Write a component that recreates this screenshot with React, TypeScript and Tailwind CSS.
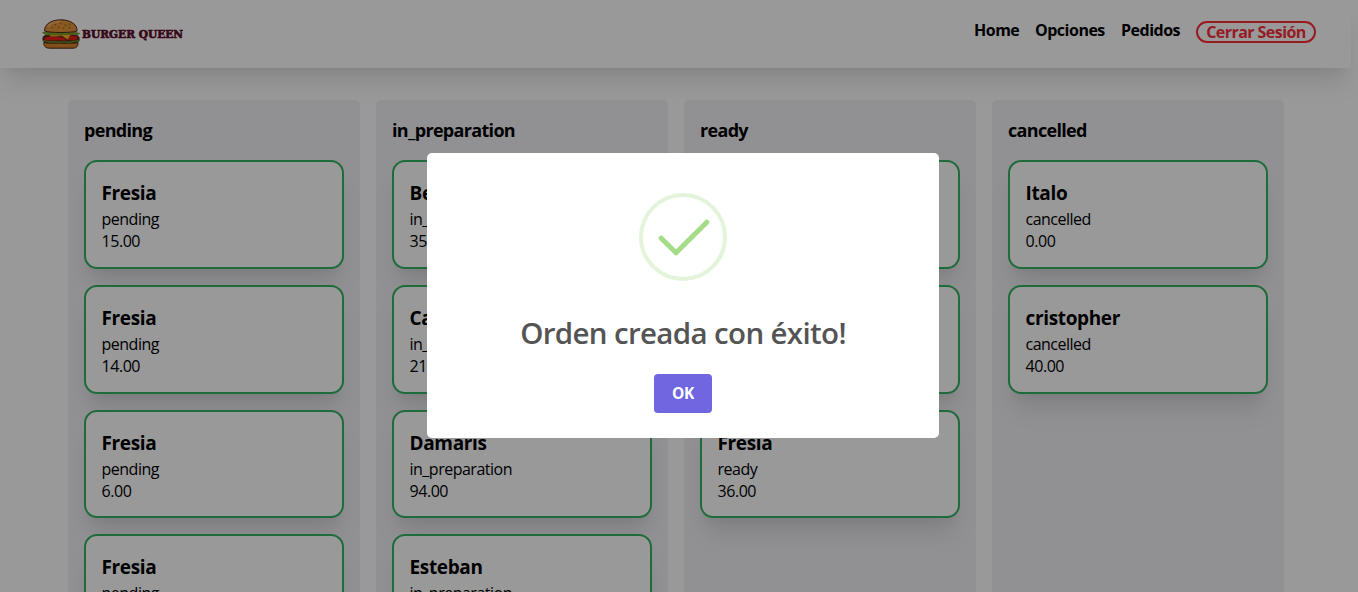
type Order = { name: string; total: string };
type Column = { status: string; orders: Order[] };

const columns: Column[] = [
  {
    status: 'pending',
    orders: [
      { name: 'Fresia', total: '15.00' },
      { name: 'Fresia', total: '14.00' },
      { name: 'Fresia', total: '6.00' },
      { name: 'Fresia', total: '12.00' },
    ],
  },
  {
    status: 'in_preparation',
    orders: [
      { name: 'Benja', total: '35.00' },
      { name: 'Camila', total: '21.00' },
      { name: 'Damaris', total: '94.00' },
      { name: 'Esteban', total: '18.00' },
    ],
  },
  {
    status: 'ready',
    orders: [
      { name: 'Ana', total: '20.00' },
      { name: 'Luis', total: '28.00' },
      { name: 'Fresia', total: '36.00' },
    ],
  },
  {
    status: 'cancelled',
    orders: [
      { name: 'Italo', total: '0.00' },
      { name: 'cristopher', total: '40.00' },
    ],
  },
];

function Logo() {
  return (
    <svg width="144" height="32" viewBox="0 0 144 32" className="block" aria-label="Burger Queen">
      <path d="M1.8 24.5H36C36.4 28 34.5 30.2 31 30.2H7.5C3.5 30.2 1.6 28 1.8 24.5Z" fill="#d9822b" stroke="#4a2a16" strokeWidth="1" />
      <path d="M.8 20.5C.8 18 3 17 6 17H33C36 17 37.3 19 37.3 21C37.3 24 35 25.2 32 25.2H7C3 25.2 .8 24 .8 20.5Z" fill="#59301c" stroke="#35200f" strokeWidth="0.7" />
      <path d="M1 23C4 21.5 6 25 10 23.9S15 25.3 19 24.1S26 25.2 29 24S34 24.2 37.2 22.2" fill="none" stroke="#5f8f2a" strokeWidth="1.6" />
      <path d="M2 20.5C5 17.5 12 18 16 18L23 20.5L24 22.6H7C4 22.6 2 22 2 20.5ZM23 18L33.5 17.8C36.5 18.2 36.5 21.8 33 22.2L25 22Z" fill="#e8201c" stroke="#8d1711" strokeWidth="0.4" />
      <path d="M5 15.5L34 15L28 17.6L25.5 21.6L20 17.8L9 18.4Z" fill="#fbb827" stroke="#a86a18" strokeWidth="0.4" />
      <path d="M.6 14.6C4 13 7 15.2 11 14.4S17 15.6 21 14.6S28 15.8 31 14.4S35 15.2 37.8 15.4C36 17 33 16.8 31 16.1C27 17 24 16 21 16.6S13 16.2 10 16.8S3 17 .6 14.6Z" fill="#7fae2f" stroke="#486a1b" strokeWidth="0.5" />
      <path d="M2.6 13C2.2 5.8 10 1.8 18.8 1.8S35.4 5.8 35 13C31 15 7 15 2.6 13Z" fill="#e5943a" stroke="#4a2a16" strokeWidth="1" />
      <path d="M6 8.2C9 4.6 14 3.6 18 3.6" fill="none" stroke="#f2b465" strokeWidth="1.6" strokeLinecap="round" />
      <path d="M13 6.6l.8.2M18 5.2l.8-.2M23 7.2l.8.2M27 6l.7.4M16.5 9.3l.8-.1M10 9.6l.8.1M21 10.2l.8-.1M27 9.6l.8.1" stroke="#8a5223" strokeWidth="1" strokeLinecap="round" />
      <text x="40" y="19.9" className="font-['DejaVu_Serif',serif] font-bold" fontSize="10.6" fill="#5c0c2c" stroke="#5c0c2c" strokeWidth="0.6" textLength="101" lengthAdjust="spacingAndGlyphs">
        BURGER QUEEN
      </text>
    </svg>
  );
}

function Header() {
  return (
    <header className="flex h-[68px] w-[1351px] items-start justify-between bg-white pr-[35px] pl-[42px] shadow-[0_20px_25px_-5px_rgba(0,0,0,0.1),0_10px_10px_-5px_rgba(0,0,0,0.04)]">
      <div className="pt-[18px]">
        <Logo />
      </div>
      <nav className="flex gap-4 pt-[19px] text-[16px] leading-[22px] font-bold text-black">
        <a className="w-[45px] tracking-[-0.5px] whitespace-nowrap">Home</a>
        <a className="w-[70px] tracking-[-0.5px] whitespace-nowrap">Opciones</a>
        <a className="w-[59px] tracking-[-0.5px] whitespace-nowrap">Pedidos</a>
        <button className="mt-0.5 flex h-[22px] w-[120px] items-center justify-center rounded-[12px] border-2 border-[#fb2f3c] font-bold tracking-[-0.55px] whitespace-nowrap text-[#fb2f3c]">
          Cerrar Sesión
        </button>
      </nav>
    </header>
  );
}

function OrderCard({ name, total, status }: Order & { status: string }) {
  return (
    <article className="h-[108.67px] shrink-0 rounded-[13px] border-2 border-[#34b262] bg-white pt-4 pl-[15.5px] shadow-[0_20px_25px_-5px_rgba(0,0,0,0.1),0_10px_10px_-5px_rgba(0,0,0,0.04)]">
      <h3 className="text-[19px] leading-[30px] font-bold tracking-[-0.35px]">{name}</h3>
      <p className="text-[16px] leading-[22px] tracking-[-0.5px]">{status}</p>
      <p className="text-[16px] leading-[22px] tracking-[-0.45px]">{total}</p>
    </article>
  );
}

function Board() {
  return (
    <main className="flex h-[600px] gap-4 pt-8 pl-[68px]">
      {columns.map((column) => (
        <section key={column.status} className="flex w-[292px] flex-col rounded-[5px] bg-[#f2f2f6] px-4 pt-[15px]">
          <h2 className="mb-[15.4px] text-[18px] leading-[30px] font-bold tracking-[-0.68px]">{column.status}</h2>
          <div className="flex flex-col gap-4">
            {column.orders.map((order, i) => (
              <OrderCard key={i} {...order} status={column.status} />
            ))}
          </div>
        </section>
      ))}
    </main>
  );
}

function SuccessDialog() {
  return (
    <div className="absolute inset-0 flex items-start bg-black/40 pt-[153px] pl-[427px]">
      <div role="dialog" className="flex h-[285px] w-[512px] flex-col items-center rounded-[5px] bg-white pt-10">
        <svg width="88" height="88" viewBox="0 0 88 88" fill="none">
          <circle cx="44" cy="44" r="42" stroke="#e4f4da" strokeWidth="4" />
          <path d="M22.2 45.2L37 59.8L67.8 29.2" stroke="#a5dc86" strokeWidth="5" strokeLinecap="round" strokeLinejoin="round" />
        </svg>
        <h2 className="mt-8 text-[29.5px] leading-[40px] font-semibold tracking-[-0.65px] whitespace-nowrap text-[#545454]">
          Orden creada con éxito!
        </h2>
        <button className="mt-[21px] h-[39px] w-[58px] rounded-[4px] bg-[#7066e0] text-[15.5px] font-bold tracking-[-0.4px] text-white">
          OK
        </button>
      </div>
    </div>
  );
}

export default function App() {
  return (
    <div className="relative h-[592px] w-[1358px] overflow-hidden bg-white font-['Open_Sans','Noto_Sans',sans-serif] text-black">
      <Header />
      <Board />
      <SuccessDialog />
    </div>
  );
}
